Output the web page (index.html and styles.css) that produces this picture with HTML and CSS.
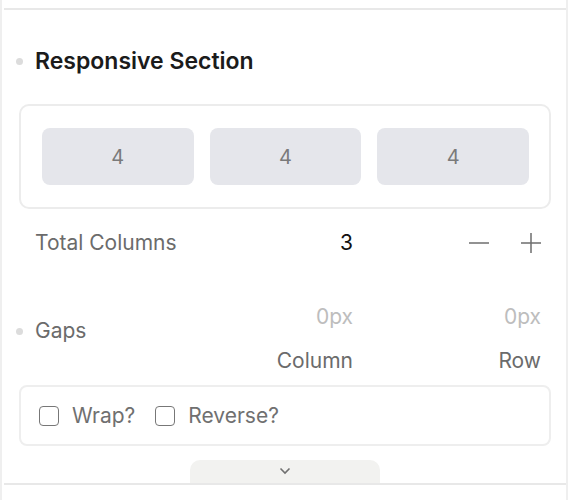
FILE: index.html
```html
<!DOCTYPE html>
<html>
<head>
<meta charset="utf-8">
<link rel="stylesheet" href="styles.css">
</head>
<body>
<div class="panel">
  <div class="content">
    <div class="heading">
      <span class="dot"></span>
      <h2 class="title">Responsive Section</h2>
    </div>
    <div class="preview">
      <div class="tile">4</div>
      <div class="tile">4</div>
      <div class="tile">4</div>
    </div>
    <div class="row columns-row">
      <span class="label">Total Columns</span>
      <span class="value">3</span>
      <div class="controls">
        <svg class="ctl" width="20" height="20" viewBox="0 0 20 20"><path d="M0 10H20" /></svg>
        <svg class="ctl" width="20" height="20" viewBox="0 0 20 20"><path d="M0 10H20M10 0V20" /></svg>
      </div>
    </div>
    <div class="row gaps-row">
      <span class="label gaps-label"><span class="dot"></span>Gaps</span>
      <span class="placeholder col2">0px</span>
      <span class="placeholder col3">0px</span>
      <span class="sub col2">Column</span>
      <span class="sub col3">Row</span>
    </div>
    <div class="options">
      <label class="check"><span class="box"></span>Wrap?</label>
      <label class="check"><span class="box"></span>Reverse?</label>
    </div>
    <div class="tab-wrap">
      <div class="tab">
        <svg width="12" height="8" viewBox="0 0 12 8"><path d="M1.5 1.5L6 6L10.5 1.5" /></svg>
      </div>
    </div>
  </div>
</div>
</body>
</html>
```
FILE: styles.css
```css
* { box-sizing: border-box; }
html, body {
  margin: 0;
  padding: 0;
  background: #ffffff;
  font-family: Inter, "Noto Sans", sans-serif;
}
.panel {
  height: 500px;
  border-left: 2px solid #efefef;
  border-right: 2px solid #efefef;
  padding-top: 8px;
}
.content {
  margin-left: 2px;
  border-top: 2px solid #e8e8e8;
  padding: 0 15px;
}
.heading {
  display: flex;
  align-items: center;
  padding-left: 16px;
  margin-top: 39px;
  height: 24px;
}
.dot {
  display: inline-block;
  width: 7px;
  height: 7px;
  border-radius: 50%;
  background: #dcdcdc;
  margin-left: -19px;
  margin-right: 12px;
  flex: none;
}
.title {
  margin: 0;
  font-size: 23px;
  line-height: 24px;
  font-weight: 600;
  color: #1b1b1b;
}
.preview {
  margin-top: 31px;
  border: 2px solid #ececec;
  border-radius: 10px;
  padding: 22px 20px 22px 21px;
  display: grid;
  grid-template-columns: repeat(3, 1fr);
  gap: 16px;
}
.tile {
  height: 57px;
  border-radius: 8px;
  background: #e5e6eb;
  color: #7a7a7a;
  font-size: 20px;
  display: flex;
  align-items: center;
  justify-content: center;
}
.row {
  display: grid;
  grid-template-columns: 1fr 150px 188px;
  padding: 0 10px 0 16px;
  font-size: 21px;
  line-height: 24px;
}
.columns-row {
  margin-top: 22px;
  align-items: center;
}
.label { color: #6b6b6b; }
.value {
  color: #111;
  text-align: right;
}
.controls {
  display: flex;
  justify-content: flex-end;
  gap: 32px;
}
.ctl path {
  stroke: #6e6e6e;
  stroke-width: 1.5;
  fill: none;
}
.gaps-row {
  margin-top: 46px;
  grid-template-rows: 32px 24px;
  row-gap: 16px;
}
.gaps-label {
  grid-row: 1 / 3;
  grid-column: 1;
  display: flex;
  align-items: center;
  padding-bottom: 12px;
}
.placeholder {
  color: #bdbdbd;
  text-align: right;
  grid-row: 1;
  align-self: center;
}
.sub {
  color: #6b6b6b;
  text-align: right;
  grid-row: 2;
}
.col2 { grid-column: 2; }
.col3 { grid-column: 3; }
.options {
  margin-top: 12px;
  height: 61px;
  border: 2px solid #eeeeee;
  border-radius: 8px;
  padding-left: 18px;
  display: flex;
  align-items: center;
  gap: 20px;
}
.check {
  display: flex;
  align-items: center;
  gap: 13px;
  font-size: 21px;
  color: #707070;
}
.box {
  width: 20px;
  height: 20px;
  border: 1.5px solid #777;
  border-radius: 4px;
}
.tab-wrap {
  margin-top: 14px;
  display: flex;
  justify-content: center;
  margin-left: -15px;
  margin-right: -15px;
  border-bottom: 2px solid #e8e8e8;
}
.tab {
  width: 190px;
  height: 23px;
  background: #f2f2f0;
  border-radius: 10px 10px 0 0;
  display: flex;
  justify-content: center;
  padding-top: 7px;
}
.tab path {
  stroke: #707070;
  stroke-width: 1.6;
  fill: none;
}
```
